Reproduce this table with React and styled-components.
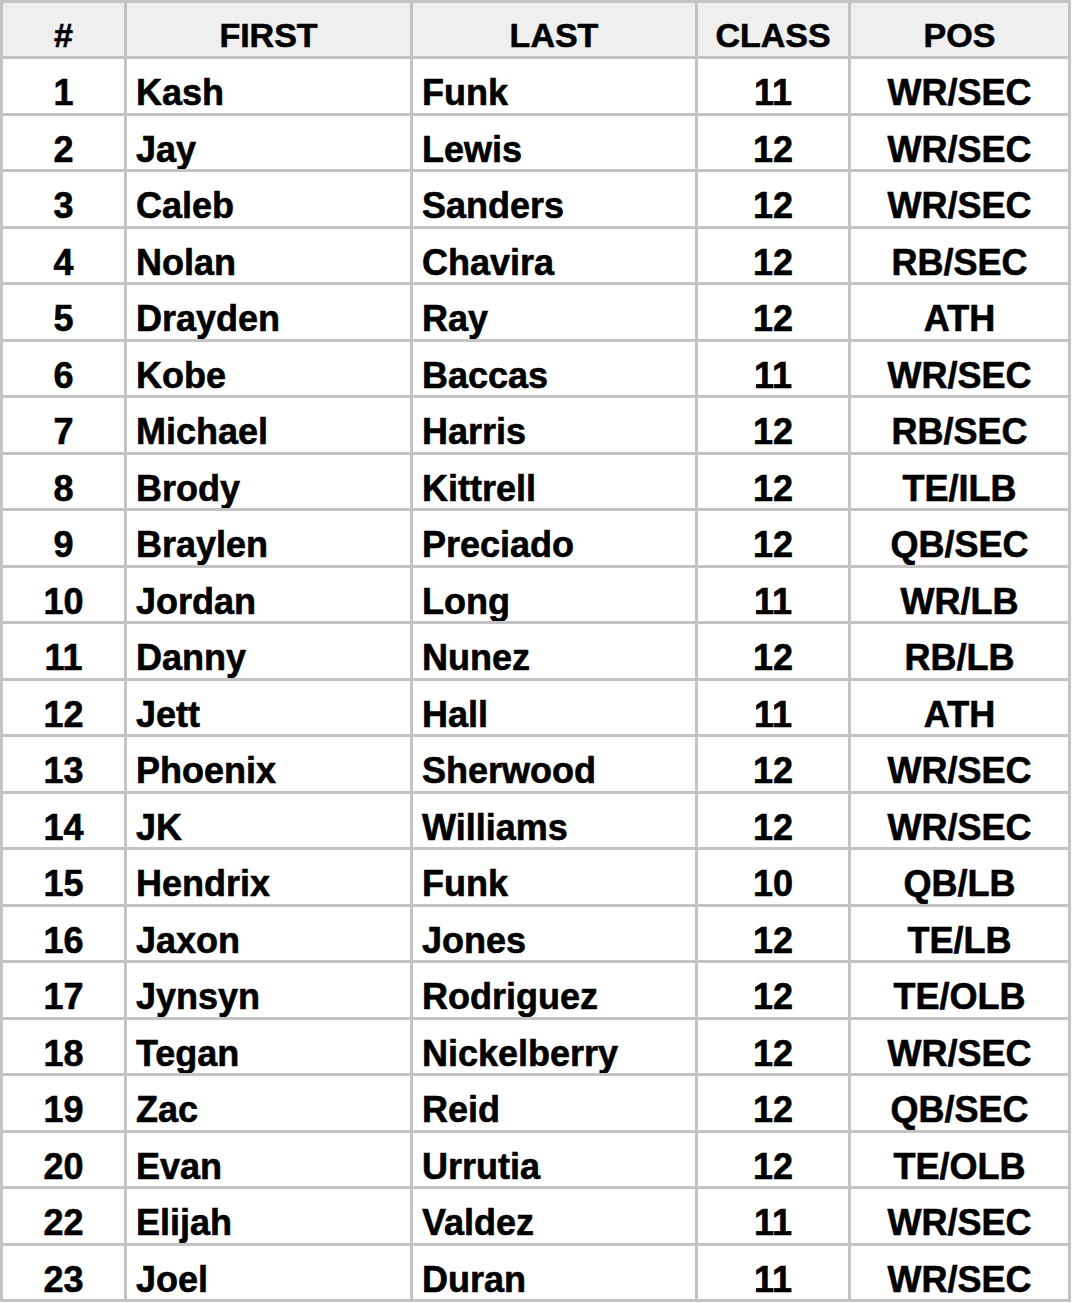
import React from 'react';
import styled, { createGlobalStyle } from 'styled-components';

const players = [
  ['1', 'Kash', 'Funk', '11', 'WR/SEC'],
  ['2', 'Jay', 'Lewis', '12', 'WR/SEC'],
  ['3', 'Caleb', 'Sanders', '12', 'WR/SEC'],
  ['4', 'Nolan', 'Chavira', '12', 'RB/SEC'],
  ['5', 'Drayden', 'Ray', '12', 'ATH'],
  ['6', 'Kobe', 'Baccas', '11', 'WR/SEC'],
  ['7', 'Michael', 'Harris', '12', 'RB/SEC'],
  ['8', 'Brody', 'Kittrell', '12', 'TE/ILB'],
  ['9', 'Braylen', 'Preciado', '12', 'QB/SEC'],
  ['10', 'Jordan', 'Long', '11', 'WR/LB'],
  ['11', 'Danny', 'Nunez', '12', 'RB/LB'],
  ['12', 'Jett', 'Hall', '11', 'ATH'],
  ['13', 'Phoenix', 'Sherwood', '12', 'WR/SEC'],
  ['14', 'JK', 'Williams', '12', 'WR/SEC'],
  ['15', 'Hendrix', 'Funk', '10', 'QB/LB'],
  ['16', 'Jaxon', 'Jones', '12', 'TE/LB'],
  ['17', 'Jynsyn', 'Rodriguez', '12', 'TE/OLB'],
  ['18', 'Tegan', 'Nickelberry', '12', 'WR/SEC'],
  ['19', 'Zac', 'Reid', '12', 'QB/SEC'],
  ['20', 'Evan', 'Urrutia', '12', 'TE/OLB'],
  ['22', 'Elijah', 'Valdez', '11', 'WR/SEC'],
  ['23', 'Joel', 'Duran', '11', 'WR/SEC'],
];

const headers = ['#', 'FIRST', 'LAST', 'CLASS', 'POS'];
// which columns hold names (left aligned)
const leftCols = [1, 2];

const GlobalStyle = createGlobalStyle`
  body {
    margin: 0;
    background: #fff;
    font-family: "Liberation Sans", Arial, sans-serif;
  }
`;

const Roster = styled.div`
  display: grid;
  width: 1071px;
  grid-template-columns: 121px 283px 282px 150px 217px;
  grid-template-rows: 53px;
  grid-auto-rows: 53.5px;
  gap: 3px;
  padding: 3px;
  box-sizing: border-box;
  background: #c3c3c3;
`;

const HeadCell = styled.div`
  background: #efefef;
  color: #000;
  font-weight: bold;
  font-size: 34px;
  line-height: 34px;
  padding-top: 15px;
  text-align: center;
  box-sizing: border-box;
  -webkit-text-stroke: 0.6px #000;
`;

const Cell = styled.div`
  background: #fff;
  color: #000;
  font-weight: bold;
  font-size: 36px;
  line-height: 36px;
  padding-top: 16px;
  padding-left: ${p => (p.$left ? '9px' : '0')};
  text-align: ${p => (p.$left ? 'left' : 'center')};
  box-sizing: border-box;
  white-space: nowrap;
  overflow: hidden;
  -webkit-text-stroke: 0.6px #000;
`;

export default function App() {
  return (
    <>
      <GlobalStyle />
      <Roster>
        {headers.map(h => (
          <HeadCell key={h}>{h}</HeadCell>
        ))}
        {players.map(row =>
          row.map((val, i) => (
            <Cell key={row[0] + '-' + i} $left={leftCols.includes(i)}>
              {val}
            </Cell>
          ))
        )}
      </Roster>
    </>
  );
}
